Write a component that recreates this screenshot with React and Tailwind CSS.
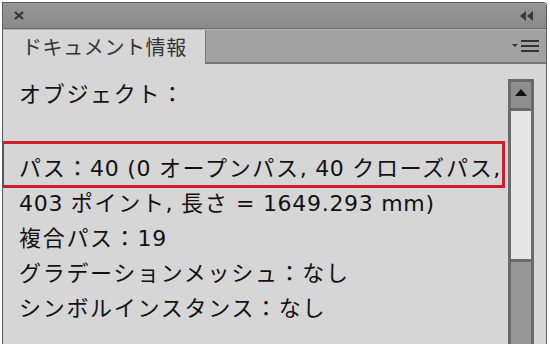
import React from 'react';

const lines = [
  { text: 'オブジェクト：', h: 'h-[35px]' },
  { text: '', h: 'h-[39px]' },
  { text: 'パス：40 (0 オープンパス, 40 クローズパス,', h: 'h-[35px]' },
  { text: '403 ポイント, 長さ = 1649.293 mm)', h: 'h-[35px]' },
  { text: '複合パス：19', h: 'h-[35px]' },
  { text: 'グラデーションメッシュ：なし', h: 'h-[35px]' },
  { text: 'シンボルインスタンス：なし', h: 'h-[35px]' },
];

// split a line into Japanese / Latin runs so each gets its own tracking
const splitRuns = (text) =>
  text.split(/([\u3000-\u9fff\uff00-\uffef]+)/).filter(Boolean).map((run, i) => {
    const jp = /[\u3000-\u9fff\uff00-\uffef]/.test(run);
    return (
      <span key={i} className={jp ? 'tracking-[1.7px]' : 'tracking-[0.7px]'}>
        {run}
      </span>
    );
  });

const App = () => {
  return (
    <div
      className="w-[550px] h-[344px] bg-white overflow-hidden pt-[2px] pl-[2px] pr-[3px]"
      style={{ fontFamily: '"DejaVu Sans", "Noto Sans CJK JP", sans-serif' }}
    >
      <div className="h-[342px] flex flex-col border-l border-t border-r border-[#5c5c5c] rounded-tr-[4px] overflow-hidden">
        {/* title bar */}
        <div className="h-[26px] shrink-0 flex items-center justify-between px-[10px] bg-gradient-to-b from-[#969696] to-[#8a8a8a] border-b border-[#6a6a6a]">
          <svg width="12" height="9" viewBox="0 0 12 9">
            <path d="M2 1 L10 8 M10 1 L2 8" stroke="#333" strokeWidth="2.2" />
          </svg>
          <svg width="14" height="10" viewBox="0 0 14 10" className="mr-[2px]">
            <path d="M0 5 L6 0 L6 10 Z M7 5 L13 0 L13 10 Z" fill="#3a3a3a" />
          </svg>
        </div>
        {/* tab row */}
        <div className="h-[35px] shrink-0 flex bg-[#a2a2a2] border-t border-[#b4b4b4]">
          <div
            className="w-[202px] bg-[#d6d6d6] flex items-center pl-[19px] text-[20px] text-[#333] tracking-[0.6px]"
            style={{ fontFamily: '"Noto Sans CJK JP", sans-serif' }}
          >
            ドキュメント情報
          </div>
          <div className="flex-1 flex items-center justify-end pr-[6px] border-l border-b-2 border-[#777]">
            <svg width="28" height="12" viewBox="0 0 28 12">
              <path d="M0 4 L6 4 L3 7 Z" fill="#333" />
              <rect x="9" y="0" width="18" height="2" fill="#333" />
              <rect x="9" y="5" width="18" height="2" fill="#333" />
              <rect x="9" y="10" width="18" height="2" fill="#333" />
            </svg>
          </div>
        </div>
        {/* content */}
        <div className="relative flex-1 flex bg-[#d6d6d6]">
          <div className="flex-1 pt-[13px] pl-[16px] text-[22px] leading-[35px] text-[#111] whitespace-nowrap">
            {lines.map((line, idx) => (
              <div key={idx} className={line.h}>{splitRuns(line.text)}</div>
            ))}
          </div>
          <div className="w-[26px] mt-[15px] mr-[12px] flex flex-col border-x-[3px] border-[#6a6a6a]">
            <div className="h-[32px] shrink-0 bg-[#8e8e8e] border-y-[3px] border-[#6a6a6a] flex items-start justify-center pt-[7px]">
              <svg width="12" height="7" viewBox="0 0 12 7">
                <path d="M6 0 L12 7 L0 7 Z" fill="#111" />
              </svg>
            </div>
            <div className="h-[148px] shrink-0 bg-[#e6e6e6]" />
            <div className="flex-1 bg-[#979797] border-t-[3px] border-[#6a6a6a]" />
          </div>
          <div className="absolute left-[-2px] top-[77px] w-[504px] h-[47px] border-[3px] border-[#cc1f2b]" />
        </div>
      </div>
    </div>
  );
};

export default App;
